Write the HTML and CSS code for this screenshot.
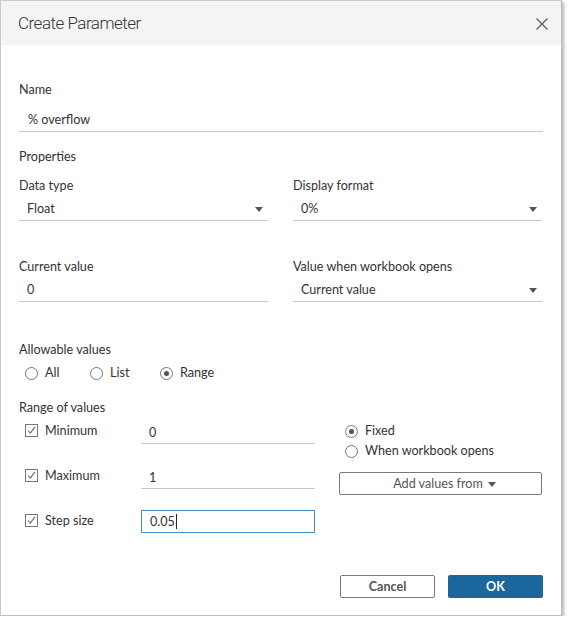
FILE: index.html
```html
<!DOCTYPE html>
<html>
<head>
<meta charset="utf-8">
<link rel="stylesheet" href="styles.css">
</head>
<body>
<div class="dialog">
  <div class="header">
    <span class="title">Create Parameter</span>
    <svg class="close" width="12" height="12" viewBox="0 0 12 12"><path d="M0.5 0.5L11.5 11.5M11.5 0.5L0.5 11.5" stroke="#5a5a5a" stroke-width="1.2" fill="none"/></svg>
  </div>
  <div class="content">
    <div class="label name-label">Name</div>
    <div class="field name-field">% overflow</div>

    <div class="label props-label">Properties</div>
    <div class="grid2">
      <div class="col">
        <div class="label">Data type</div>
        <div class="field select">Float<span class="arrow"></span></div>
      </div>
      <div class="col">
        <div class="label">Display format</div>
        <div class="field select">0%<span class="arrow"></span></div>
      </div>
    </div>
    <div class="grid2 second">
      <div class="col">
        <div class="label">Current value</div>
        <div class="field">0</div>
      </div>
      <div class="col">
        <div class="label">Value when workbook opens</div>
        <div class="field select">Current value<span class="arrow"></span></div>
      </div>
    </div>

    <div class="label allow-label">Allowable values</div>
    <div class="radios">
      <div class="opt"><span class="radio"></span>All</div>
      <div class="opt"><span class="radio"></span>List</div>
      <div class="opt"><span class="radio on"></span>Range</div>
    </div>

    <div class="label range-label">Range of values</div>
    <div class="range">
      <div class="rows">
        <div class="row">
          <div class="chk"><span class="box"><svg width="11" height="11" viewBox="0 0 11 11"><path d="M2 5.5L4.3 8.2L9 1.8" stroke="#666" stroke-width="1.1" fill="none"/></svg></span>Minimum</div>
          <div class="field rfield">0</div>
        </div>
        <div class="row">
          <div class="chk"><span class="box"><svg width="11" height="11" viewBox="0 0 11 11"><path d="M2 5.5L4.3 8.2L9 1.8" stroke="#666" stroke-width="1.1" fill="none"/></svg></span>Maximum</div>
          <div class="field rfield">1</div>
        </div>
        <div class="row">
          <div class="chk"><span class="box"><svg width="11" height="11" viewBox="0 0 11 11"><path d="M2 5.5L4.3 8.2L9 1.8" stroke="#666" stroke-width="1.1" fill="none"/></svg></span>Step size</div>
          <div class="focus">0.05<span class="caret"></span></div>
        </div>
      </div>
      <div class="side">
        <div class="opt2"><span class="radio on"></span>Fixed</div>
        <div class="opt2"><span class="radio"></span>When workbook opens</div>
        <div class="btn addbtn">Add values from<span class="arrow2"></span></div>
      </div>
    </div>
  </div>
  <div class="footer">
    <div class="btn cancel">Cancel</div>
    <div class="btn ok">OK</div>
  </div>
</div>
</body>
</html>
```

FILE: styles.css
```css
html, body {
  margin: 0;
  padding: 0;
  background: #ffffff;
}
body {
  font-family: Lato, "Liberation Sans", sans-serif;
  font-size: 12.6px;
  color: #333333;
}
.dialog {
  width: 560px;
  height: 614px;
  border: 1px solid #c9c9c9;
  border-right-color: #bdbdbd;
  border-bottom-color: #bdbdbd;
  box-shadow: 2px 2px 3px rgba(0,0,0,0.28);
  display: flex;
  flex-direction: column;
  background: #fff;
}
.header {
  height: 44px;
  background: #f4f4f4;
  display: flex;
  align-items: center;
  justify-content: space-between;
  padding: 0 13px 0 17px;
}
.title {
  font-family: Roboto, Lato, sans-serif;
  font-size: 17px;
  font-weight: 300;
  color: #333;
  letter-spacing: -0.5px;
}
.close {
  display: block;
  margin-top: 1px;
}
.content {
  padding: 0 18px 0 18px;
}
.label {
  line-height: 16px;
  height: 16px;
}
.name-label { margin-top: 37px; }
.field {
  height: 22px;
  line-height: 22px;
  border-bottom: 1px solid #c8c8c8;
  padding-left: 9px;
  position: relative;
}
.name-field { margin-top: 11px; }
.props-label { margin-top: 17px; }
.grid2 {
  display: grid;
  grid-template-columns: 249px 249px;
  column-gap: 25px;
  margin-top: 13px;
}
.grid2 .field { margin-top: 4px; padding-left: 8px; }
.grid2.second { margin-top: 38px; }
.select { display: flex; justify-content: space-between; align-items: center; padding-right: 5px; }
.arrow {
  width: 0;
  height: 0;
  border-left: 4px solid transparent;
  border-right: 4px solid transparent;
  border-top: 5px solid #555;
  margin-top: 1px;
}
.allow-label { margin-top: 40px; }
.radios {
  display: grid;
  grid-template-columns: 65px 70px auto;
  padding-left: 6px;
  margin-top: 7px;
  height: 16px;
  align-items: center;
}
.opt, .opt2 {
  display: flex;
  align-items: center;
  line-height: 16px;
}
.radio {
  width: 11px;
  height: 11px;
  border: 1px solid #777;
  border-radius: 50%;
  margin-right: 7px;
  display: flex;
  align-items: center;
  justify-content: center;
  background: #fff;
  flex: none;
}
.radio.on::after {
  content: "";
  width: 5px;
  height: 5px;
  border-radius: 50%;
  background: #555;
}
.range-label { margin-top: 19px; }
.range {
  display: flex;
  gap: 24px;
  margin-top: 5px;
}
.rows {
  width: 296px;
  display: flex;
  flex-direction: column;
  gap: 22px;
}
.row {
  display: flex;
  height: 23px;
}
.chk {
  width: 116px;
  padding-left: 6px;
  display: flex;
  align-items: flex-start;
  padding-top: 2px;
  line-height: 16px;
}
.box {
  width: 11px;
  height: 11px;
  border: 1px solid #777;
  margin-right: 7px;
  display: flex;
  align-items: center;
  justify-content: center;
  flex: none;
  margin-top: 1px;
}
.box svg { display: block; }
.rfield {
  width: 166px;
  padding-left: 8px;
  line-height: 24px;
}
.focus {
  width: 164px;
  height: 21px;
  border: 1px solid #3d8fd1;
  padding-left: 8px;
  line-height: 22px;
  display: flex;
  align-items: center;
  margin-top: -1px;
}
.caret {
  display: inline-block;
  width: 1px;
  height: 15px;
  background: #222;
  margin-left: 1px;
}
.side {
  width: 203px;
  display: flex;
  flex-direction: column;
  padding-top: 0px;
}
.opt2 {
  padding-left: 6px;
  height: 20px;
}
.btn {
  box-sizing: border-box;
  height: 23px;
  display: flex;
  align-items: center;
  justify-content: center;
  border-radius: 2px;
}
.addbtn {
  margin-top: 11px;
  border: 1px solid #7a7a7a;
  color: #555;
  padding-left: 8px;
}
.arrow2 {
  width: 0;
  height: 0;
  border-left: 4px solid transparent;
  border-right: 4px solid transparent;
  border-top: 5px solid #555;
  margin-left: 5px;
  margin-top: 1px;
}
.footer {
  margin-top: auto;
  display: flex;
  justify-content: flex-end;
  gap: 13px;
  padding: 0 18px 17px 0;
}
.cancel {
  width: 95px;
  border: 1px solid #7a7a7a;
  color: #555;
  font-weight: 700;
}
.ok {
  width: 95px;
  background: #1b679d;
  color: #fff;
  font-weight: 700;
}
```
